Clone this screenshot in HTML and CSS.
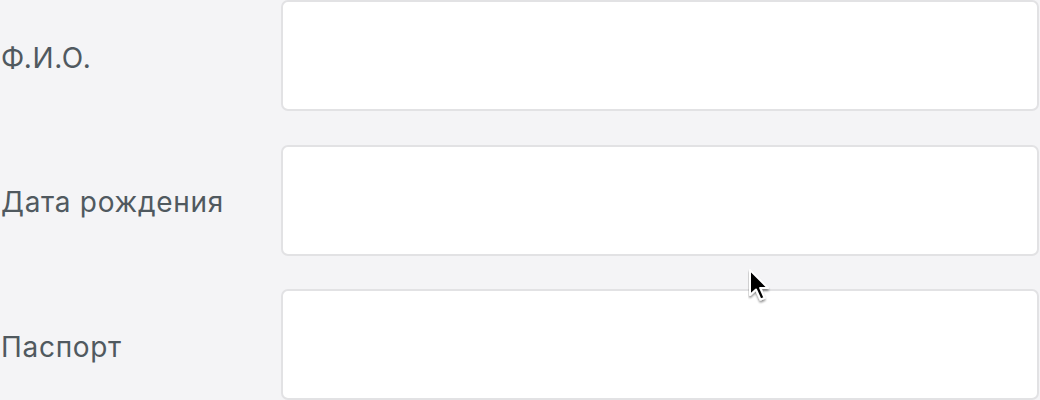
FILE: index.html
```html
<!DOCTYPE html>
<html lang="ru">
<head>
<meta charset="utf-8">
<title>Форма</title>
<link rel="stylesheet" href="styles.css">
</head>
<body>
<form class="form">
  <div class="row">
    <label class="label" for="fio">Ф.И.О.</label>
    <input class="field" id="fio" type="text">
  </div>
  <div class="row">
    <label class="label" for="dob">Дата рождения</label>
    <input class="field" id="dob" type="text">
  </div>
  <div class="row">
    <label class="label" for="pass">Паспорт</label>
    <input class="field" id="pass" type="text">
  </div>
</form>
<svg class="cursor" width="24" height="36" viewBox="0 0 24 36" aria-hidden="true">
  <defs>
    <filter id="sh" x="-50%" y="-50%" width="200%" height="200%">
      <feGaussianBlur in="SourceAlpha" stdDeviation="1.2"/>
      <feOffset dx="0" dy="1.5" result="b"/>
      <feComponentTransfer><feFuncA type="linear" slope="0.45"/></feComponentTransfer>
      <feMerge><feMergeNode/><feMergeNode in="SourceGraphic"/></feMerge>
    </filter>
  </defs>
  <path filter="url(#sh)" d="M2 1 L2 26 L8 20.5 L12.5 30.5 L16.5 28.8 L12.2 19 L20 19 Z" fill="#000" stroke="#fff" stroke-width="2" stroke-linejoin="round"/>
</svg>
</body>
</html>
```
FILE: styles.css
```css
html, body {
  margin: 0;
  padding: 0;
  background: #f4f4f6;
}
body {
  width: 1040px;
  height: 400px;
  overflow: hidden;
  position: relative;
  font-family: Inter, "Noto Sans", "Liberation Sans", sans-serif;
}
.form {
  display: flex;
  flex-direction: column;
  gap: 33.5px;
  padding: 0 1px 0 0;
}
.row {
  display: grid;
  grid-template-columns: 281px 1fr;
  align-items: center;
  height: 111px;
}
.label {
  font-size: 28px;
  color: #50595f;
  padding-left: 1px;
  padding-top: 4px;
  letter-spacing: 0.7px;
}
.field {
  box-sizing: border-box;
  height: 111px;
  width: 100%;
  margin: 0;
  background: #fff;
  border: 2px solid #e2e2e4;
  border-radius: 7px;
  outline: none;
}
.cursor {
  position: absolute;
  left: 748px;
  top: 269px;
}
```
